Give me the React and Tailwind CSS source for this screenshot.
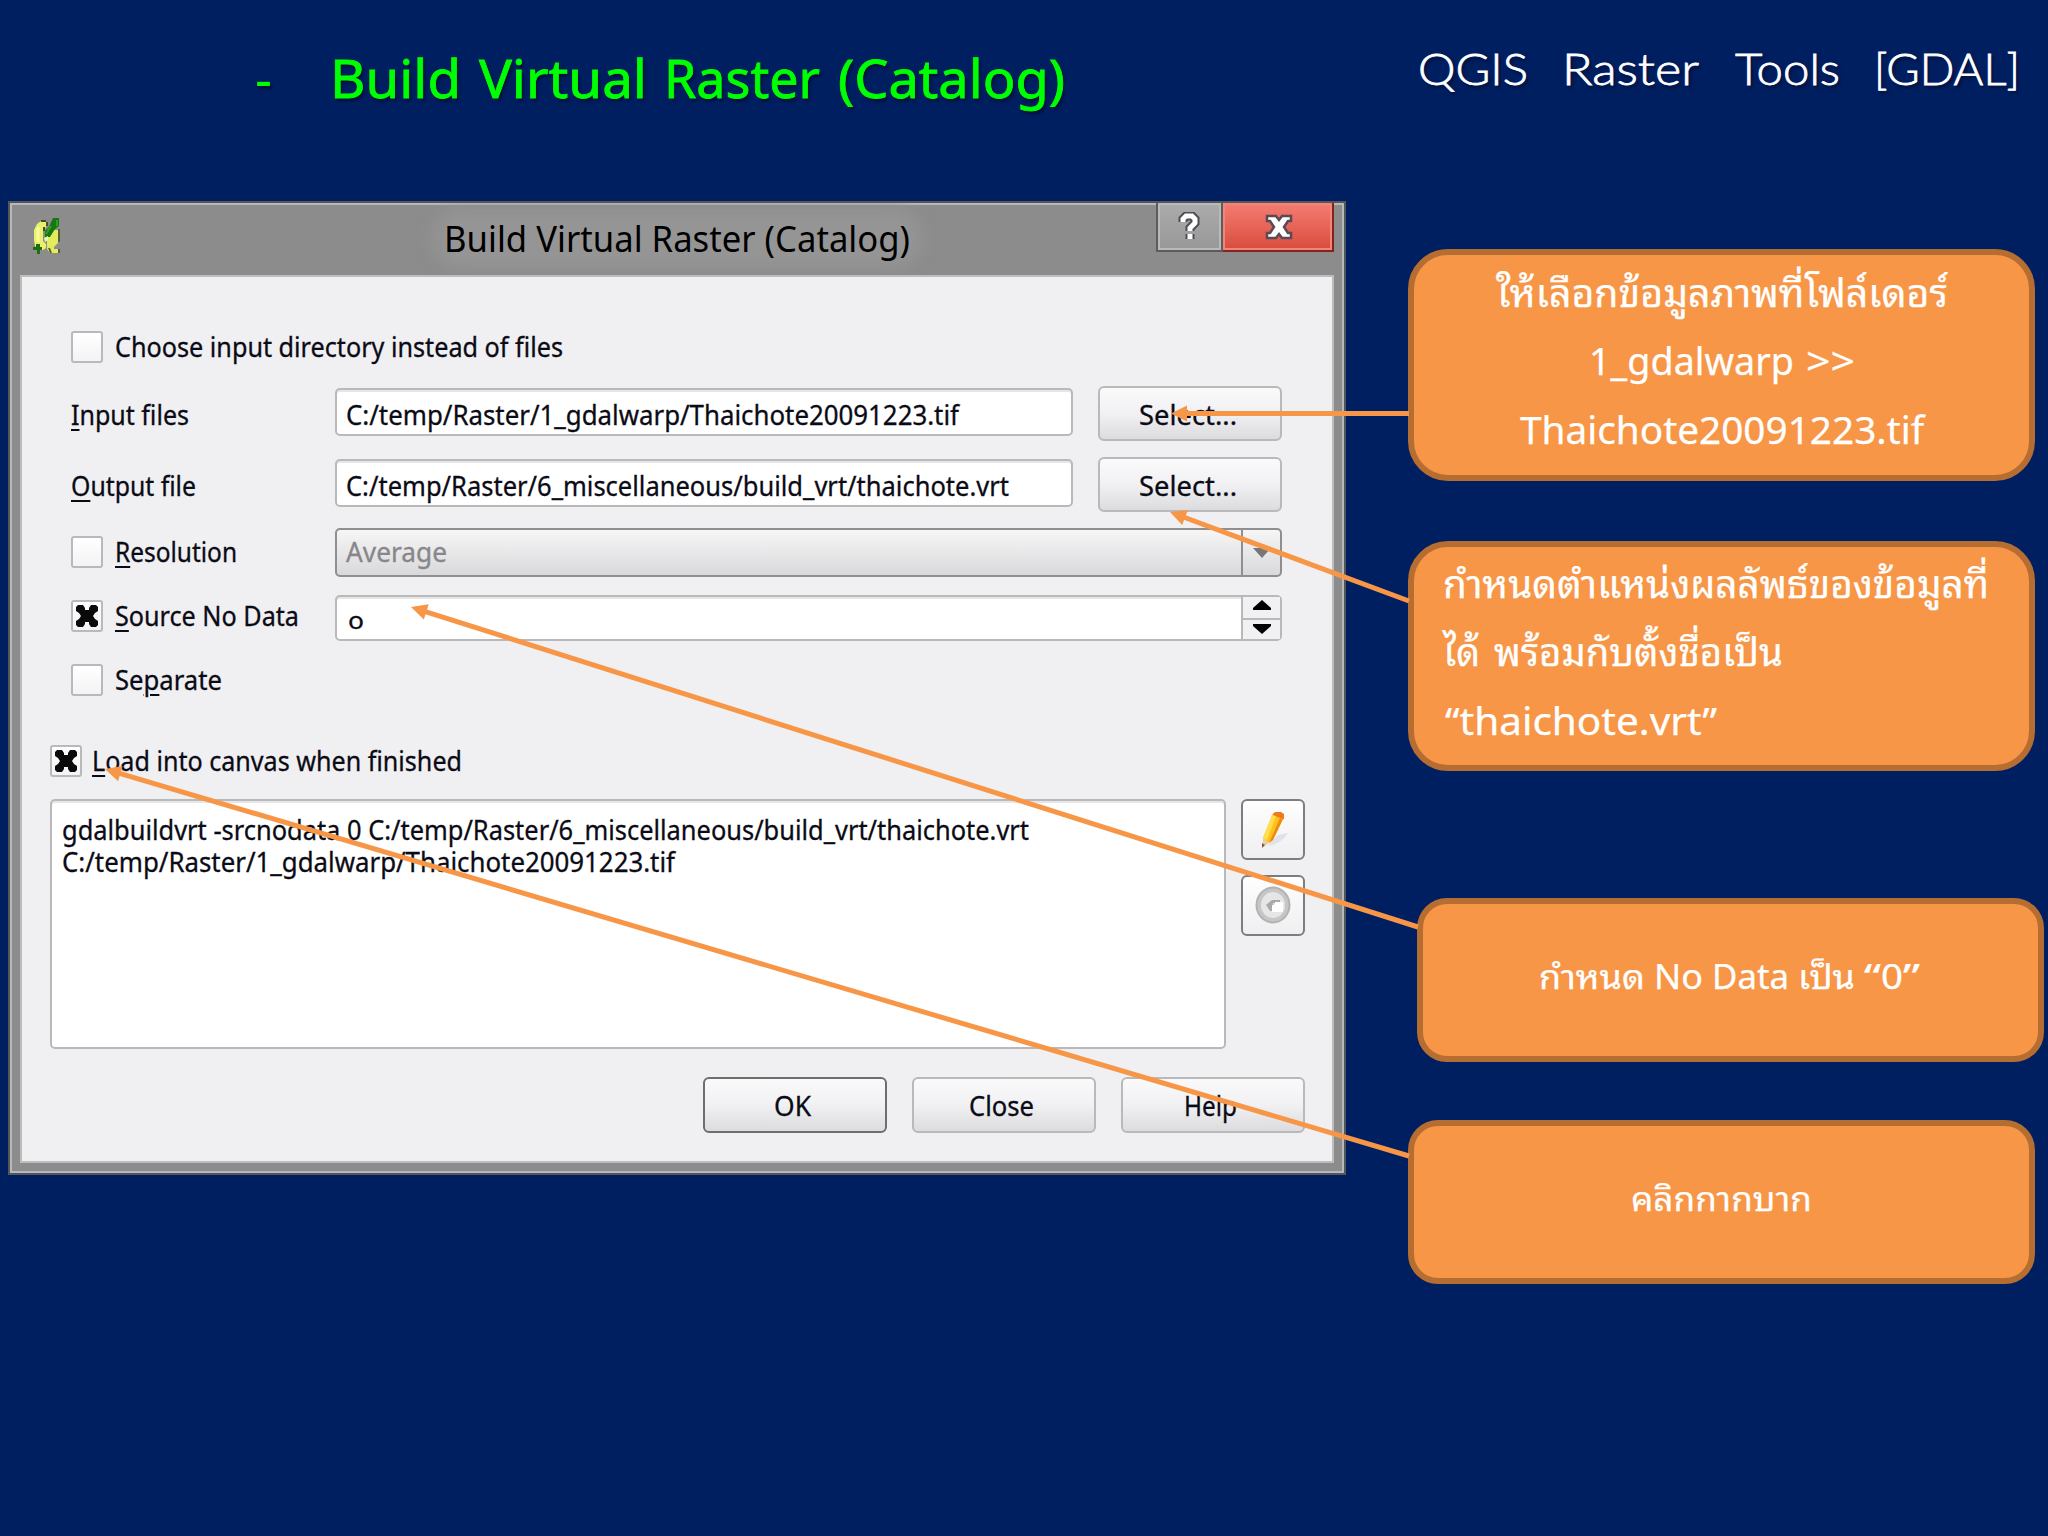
import React, { useLayoutEffect, useRef, useState } from 'react';

// Text squeezed or stretched horizontally to a given width
const Fit = ({ w, children, className = '' }) => {
    const ref = useRef(null);
    const [scale, setScale] = useState(1);

    useLayoutEffect(() => {
        setScale(w / ref.current.getBoundingClientRect().width);
    }, []);

    return (
        <span className={`block shrink-0 ${className}`} style={{ width: w }}>
            <span className="block w-max origin-left" style={{ transform: `scaleX(${scale})` }}>
                <span ref={ref} className="inline-block whitespace-pre">{children}</span>
            </span>
        </span>
    );
};

const Key = ({ children }) => (
    <span className="underline decoration-2 underline-offset-4">{children}</span>
);

const CheckBox = ({ checked }) => (
    <span className="flex h-8 w-8 shrink-0 items-center justify-center rounded-[3px] border-2 border-[#b9b9bb] bg-linear-to-b from-[#ffffff] to-[#f3f3f5]">
        {checked && (
            <svg width="24" height="24" viewBox="0 0 24 24">
                <path d="M3 1h5l2 3v2h4V4l2-3h5l2 2v4l-3 2-2 3 2 3 3 2v4l-2 2h-5l-2-3v-2h-4v2l-2 3H3l-2-2v-4l3-2 2-3-2-3-3-2V3z" fill="#0a0a0a" />
            </svg>
        )}
    </span>
);

const Option = ({ w, checked, gap = 'gap-3', children }) => (
    <div className={`flex items-center ${gap}`}>
        <CheckBox checked={checked} />
        <Fit w={w}>{children}</Fit>
    </div>
);

const TextField = ({ w, children }) => (
    <div className="mb-[3px] flex h-12 w-[738px] items-center rounded-[5px] border-[2.5px] border-[#b9b9bb] bg-white pl-[9px] pt-[5px] shadow-[inset_0_2px_0_#e6e6e8]">
        <Fit w={w}>{children}</Fit>
    </div>
);

const Button = ({ w, className = 'h-14 border-[#b9b9bb]', children }) => (
    <button
        type="button"
        className={`flex w-[184px] items-center justify-center rounded-[6px] border-[2.5px] bg-linear-to-b from-[#fafafb] via-[#f1f1f3] to-[#dcdcde] pr-[5px] pt-[2px] ${className}`}
    >
        <Fit w={w}>{children}</Fit>
    </button>
);

const ToolButton = ({ children }) => (
    <button
        type="button"
        className="flex h-[61px] w-16 items-center justify-center rounded-[6px] border-[2.5px] border-[#7d7d80] bg-linear-to-b from-[#fefefe] to-[#efeff1]"
    >
        {children}
    </button>
);

const AppIcon = () => (
    <svg width="28" height="36" viewBox="0 0 28 36">
        <path d="M4 6l4-3h5v6l-3 4v10l3 3v4l-3 2H5l-3-4-1-6V12z" fill="#e9f06a" />
        <path d="M8 3h5M14 4v4M11 9v4" stroke="#4a4a2c" strokeWidth="2" />
        <path d="M5 9v15" stroke="#f7fb9c" strokeWidth="3" />
        <path d="M19 12h6v13l-4 4v2h5v4h-9l-3-4V20z" fill="#e2ec5c" />
        <path d="M26 11v13M26 31v4M16 30l2 5" stroke="#5b5d35" strokeWidth="2" />
        <path d="M20 0h6v8l-4 3-5 8h-5v-6l4-4z" fill="#14780f" />
        <path d="M24 2v6M18 8l-5 8" stroke="#2ea021" strokeWidth="2" />
        <path d="M11 20l4-2v4l-3 2z" fill="#e9f3b6" />
        <path d="M0 29h3v-3h4v3h2v3H7v4H4v-4H0z" fill="#1d6d12" />
    </svg>
);

const PencilIcon = () => (
    <svg width="36" height="40" viewBox="0 0 36 40">
        <path d="M13 36c8-1 17-7 20-13l-10 2-8 8z" fill="#dfe2ea" />
        <path d="M17 5l3-3h6l3 2v5l-3 1-8-2z" fill="#ee7a1c" />
        <path d="M17 5l11 4-10 21-4 3-5-2-1-3z" fill="#ffc21c" />
        <path d="M17 5l4 1-9 24-4-2z" fill="#ffdf4e" />
        <path d="M25 8l3 1-10 21-4 3z" fill="#f08a12" />
        <path d="M8 28l6 5-6 4z" fill="#e6cfa4" />
        <path d="M7 33l3 2-3 3z" fill="#7b5a4a" />
    </svg>
);

const RunIcon = () => (
    <svg width="38" height="40" viewBox="0 0 38 40">
        <ellipse cx="19" cy="19" rx="17.5" ry="18.5" fill="#b2b2b3" />
        <ellipse cx="19" cy="19" rx="15.5" ry="16.5" fill="#c6c6c7" />
        <ellipse cx="19" cy="19" rx="12" ry="13" fill="#e6e6e7" />
        <path d="M12 19l6-5h8v3h-7v8h-3z" fill="#a9a9aa" />
        <path d="M18 19h3v-3h8v10H18z" fill="#ffffff" />
    </svg>
);

const TitleBar = () => (
    <div className="flex h-[72px] items-start overflow-hidden">
        <div className="ml-[23px] mt-[15px]">
            <AppIcon />
        </div>
        <div className="ml-[383px] mt-[17px] flex h-[36px] items-center rounded-full bg-[#959595] text-[37px] text-black shadow-[0_0_16px_12px_#959595]">
            <Fit w={466}>Build Virtual Raster (Catalog)</Fit>
        </div>
        <div className="ml-auto flex h-[49px] pr-[10px]">
            <div className="flex w-[67px] items-center justify-center border-2 border-t-0 border-[#5c5c5c] bg-linear-to-b from-[#ababab] to-[#989898] pr-[2px] shadow-[inset_0_0_0_2px_#b9b9b9]">
                <svg width="22" height="30" viewBox="0 0 22 30">
                    <path
                        d="M5 10V7l3-3h6l3 3v4l-5 5v3M12 22v5"
                        fill="none"
                        stroke="#4c4c55"
                        strokeWidth="9"
                    />
                    <path d="M5 10V7l3-3h6l3 3v4l-5 5v3M12 22v5" fill="none" stroke="#ffffff" strokeWidth="5" />
                </svg>
            </div>
            <div className="flex w-[111px] items-center justify-center border-2 border-l-0 border-t-0 border-[#84231a] bg-linear-to-b from-[#f47c72] to-[#d94b3c] pl-[2px] shadow-[inset_0_0_0_2px_#f28579]">
                <svg width="30" height="28" viewBox="0 0 30 28">
                    <path
                        d="M3 3h9l3 4 3-4h9v5h-3l-4 6 4 6h3v5h-9l-3-4-3 4H3v-5h3l4-6-4-6H3z"
                        fill="#ffffff"
                        stroke="#5b4a55"
                        strokeWidth="2.5"
                    />
                </svg>
            </div>
        </div>
    </div>
);

const Dialog = () => (
    <div className="ml-2 flex h-[974px] w-[1338px] flex-col border-2 border-[#55565a] bg-[#8c8c8c] shadow-[inset_2px_2px_0_#b8b8b8,inset_-2px_-2px_0_#b8b8b8]">
        <TitleBar />
        <div className="mx-[10px] h-[888px] border-2 border-[#bdbdbd] bg-[#f0eff1] pt-[54px] text-[27px] leading-8 text-[#0b0b16] [-webkit-text-stroke:0.3px]">
            <div className="ml-[49px] flex w-[1211px] flex-col">
                <Option w={448}>Choose input directory instead of files</Option>
                <div className="mt-[23px] flex h-[55px] items-center">
                    <Fit w={118} className="mr-[146px] pt-[2px]"><Key>I</Key>nput files</Fit>
                    <TextField w={613}>C:/temp/Raster/1_gdalwarp/Thaichote20091223.tif</TextField>
                    <Button w={98} className="ml-auto h-[55px] border-[#b9b9bb]">Select...</Button>
                </div>
                <div className="mt-4 flex h-[55px] items-center">
                    <Fit w={125} className="mr-[139px] pt-[2px]"><Key>O</Key>utput file</Fit>
                    <TextField w={663}>C:/temp/Raster/6_miscellaneous/build_vrt/thaichote.vrt</TextField>
                    <Button w={98} className="ml-auto h-[55px] border-[#b9b9bb]">Select...</Button>
                </div>
                <div className="mt-4 flex h-[49px] items-center">
                    <div className="w-[264px] pb-[2px]">
                        <Option w={122}><Key>R</Key>esolution</Option>
                    </div>
                    <div className="flex h-full flex-1 rounded-[5px] border-[2.5px] border-[#8f8f92] bg-linear-to-b from-[#f6f6f7] to-[#d9d9db]">
                        <div className="flex flex-1 items-center pb-[2px] pl-[9px] text-[#87878a]">
                            <Fit w={101}>Average</Fit>
                        </div>
                        <div className="flex w-[39px] items-center justify-center border-l-2 border-[#8f8f92]">
                            <svg width="18" height="12" viewBox="0 0 18 12">
                                <path d="M0 1h18L9 11z" fill="#77777b" />
                            </svg>
                        </div>
                    </div>
                </div>
                <div className="mt-[18px] flex h-[46px] items-center">
                    <div className="w-[264px] pb-1">
                        <Option w={184} checked><Key>S</Key>ource No Data</Option>
                    </div>
                    <div className="flex h-full flex-1 rounded-[5px] border-[2.5px] border-[#b9b9bb] bg-white shadow-[inset_0_2px_0_#e6e6e8]">
                        <div className="flex flex-1 items-center pl-[11px] pt-1 text-[23px]">
                            <Fit w={16}>o</Fit>
                        </div>
                        <div className="flex w-[39px] flex-col border-l-2 border-[#b9b9bb] bg-[#f1f1f3]">
                            <div className="flex flex-1 items-center justify-center border-b-2 border-[#b9b9bb] pb-1">
                                <svg width="18" height="11" viewBox="0 0 18 11">
                                    <path d="M9 0l9 8v2H0V8z" fill="#000000" />
                                </svg>
                            </div>
                            <div className="flex flex-1 items-center justify-center pb-[2px]">
                                <svg width="18" height="11" viewBox="0 0 18 11">
                                    <path d="M0 1h18v2l-9 8-9-8z" fill="#000000" />
                                </svg>
                            </div>
                        </div>
                    </div>
                </div>
                <div className="mt-[23px]">
                    <Option w={107}>Se<Key>p</Key>arate</Option>
                </div>
            </div>

            <div className="ml-7 mt-[49px]">
                <Option w={370} checked gap="gap-[10px]"><Key>L</Key>oad into canvas when finished</Option>
            </div>
            <div className="ml-7 mt-[22px] flex w-[1255px] justify-between">
                <div className="h-[250px] w-[1176px] rounded-[5px] border-[2.5px] border-[#b9b9bb] bg-white pl-[10px] pt-[13px] shadow-[inset_0_2px_0_#e6e6e8]">
                    <Fit w={967}>gdalbuildvrt -srcnodata 0 C:/temp/Raster/6_miscellaneous/build_vrt/thaichote.vrt</Fit>
                    <Fit w={613}>C:/temp/Raster/1_gdalwarp/Thaichote20091223.tif</Fit>
                </div>
                <div className="flex flex-col gap-[15px]">
                    <ToolButton><PencilIcon /></ToolButton>
                    <ToolButton><RunIcon /></ToolButton>
                </div>
            </div>
            <div className="ml-7 mt-7 flex w-[1255px] justify-end gap-[25px]">
                <Button w={37} className="h-14 border-[#6e6e71]">OK</Button>
                <Button w={65}>Close</Button>
                <Button w={53}>Help</Button>
            </div>
        </div>
    </div>
);

const Callout = ({ className, children }) => (
    <div className={`flex w-[627px] flex-col border-[6px] border-[#b66d31] bg-[#f79646] text-[38px] leading-[68px] text-white [-webkit-text-stroke:0.25px] ${className}`}>
        {children}
    </div>
);

const arrows = [
    { from: [1409, 413.5], to: [1171, 413.5] },
    { from: [1409, 601], to: [1170, 512] },
    { from: [1418, 927], to: [411, 607] },
    { from: [1409, 1156], to: [105, 769] },
];

const Arrow = ({ from, to }) => {
    const angle = (Math.atan2(to[1] - from[1], to[0] - from[0]) * 180) / Math.PI;
    const length = Math.hypot(to[0] - from[0], to[1] - from[1]);
    return (
        <g transform={`translate(${from[0]} ${from[1]}) rotate(${angle})`} fill="#f79646">
            <rect x="0" y="-2.5" width={length - 10} height="5" />
            <path d={`M${length} 0l-16-8v16z`} />
        </g>
    );
};

const App = () => {
    return (
        <div className="relative h-[1536px] w-[2048px] overflow-hidden bg-[#001f60] font-['Noto_Sans','Noto_Sans_Thai_Looped','Noto_Looped_Thai','Sarabun','Loma','Garuda','Laksaman',sans-serif]">
            <div className="flex h-[201px] items-start">
                <h1 className="ml-[255px] flex h-[156px] items-center text-[53px] text-[#00ff00] [-webkit-text-stroke:0.8px] [text-shadow:2px_3px_3px_#00103a]">
                    <Fit w={17} className="mr-[58px] [-webkit-text-stroke:0px]">-</Fit>
                    <Fit w={131} className="mr-[18px]">Build</Fit>
                    <Fit w={168} className="mr-[17px]">Virtual</Fit>
                    <Fit w={156} className="mr-[18px]">Raster</Fit>
                    <Fit w={227}>(Catalog)</Fit>
                </h1>
                <h2 className="ml-[353px] flex h-[135px] items-center font-['Lato',sans-serif] text-[44px] font-light text-white [-webkit-text-stroke:0.8px] [text-shadow:2px_3px_3px_#00103a]">
                    <Fit w={110} className="mr-[34px]">QGIS</Fit>
                    <Fit w={137} className="mr-[36px]">Raster</Fit>
                    <Fit w={105} className="mr-[34px]">Tools</Fit>
                    <Fit w={146}>[GDAL]</Fit>
                </h2>
            </div>

            <div className="flex items-start">
                <Dialog />
                <div className="ml-[62px] mt-12 flex flex-col">
                    <Callout className="h-[232px] items-center rounded-[40px] pt-[3px]">
                        <Fit w={452}>ให้เลือกข้อมูลภาพที่โฟล์เดอร์</Fit>
                        <div className="flex gap-[12px]">
                            <Fit w={205}>1_gdalwarp</Fit>
                            <Fit w={49}>&gt;&gt;</Fit>
                        </div>
                        <Fit w={404} className="pt-[1px]">Thaichote20091223.tif</Fit>
                    </Callout>
                    <Callout className="mt-[60px] h-[230px] rounded-[40px] pl-[29px] pt-[2px]">
                        <Fit w={546}>กำหนดตำแหน่งผลลัพธ์ของข้อมูลที่</Fit>
                        <div className="flex gap-[14px]">
                            <Fit w={37}>ได้</Fit>
                            <Fit w={289}>พร้อมกับตั้งชื่อเป็น</Fit>
                        </div>
                        <Fit w={272} className="ml-[2px] pt-[1px]">“thaichote.vrt”</Fit>
                    </Callout>
                    <Callout className="ml-[9px] mt-[127px] h-[164px] items-center justify-center rounded-[30px]">
                        <div className="flex gap-[9px] pb-[9px] pr-[3px] text-[34px]">
                            <Fit w={106}>กำหนด</Fit>
                            <Fit w={49}>No</Fit>
                            <Fit w={77}>Data</Fit>
                            <Fit w={57}>เป็น</Fit>
                            <div className="flex">
                                <Fit w={17}>“</Fit>
                                <Fit w={22}>0</Fit>
                                <Fit w={17}>”</Fit>
                            </div>
                        </div>
                    </Callout>
                    <Callout className="mt-[58px] h-[164px] items-center justify-center rounded-[30px]">
                        <Fit w={181} className="pb-[9px] text-[34px]">คลิกกากบาก</Fit>
                    </Callout>
                </div>
            </div>

            <svg className="absolute left-0 top-0" width="2048" height="1536">
                {arrows.map((arrow, index) => (
                    <Arrow key={index} from={arrow.from} to={arrow.to} />
                ))}
            </svg>
        </div>
    );
};

export default App;
